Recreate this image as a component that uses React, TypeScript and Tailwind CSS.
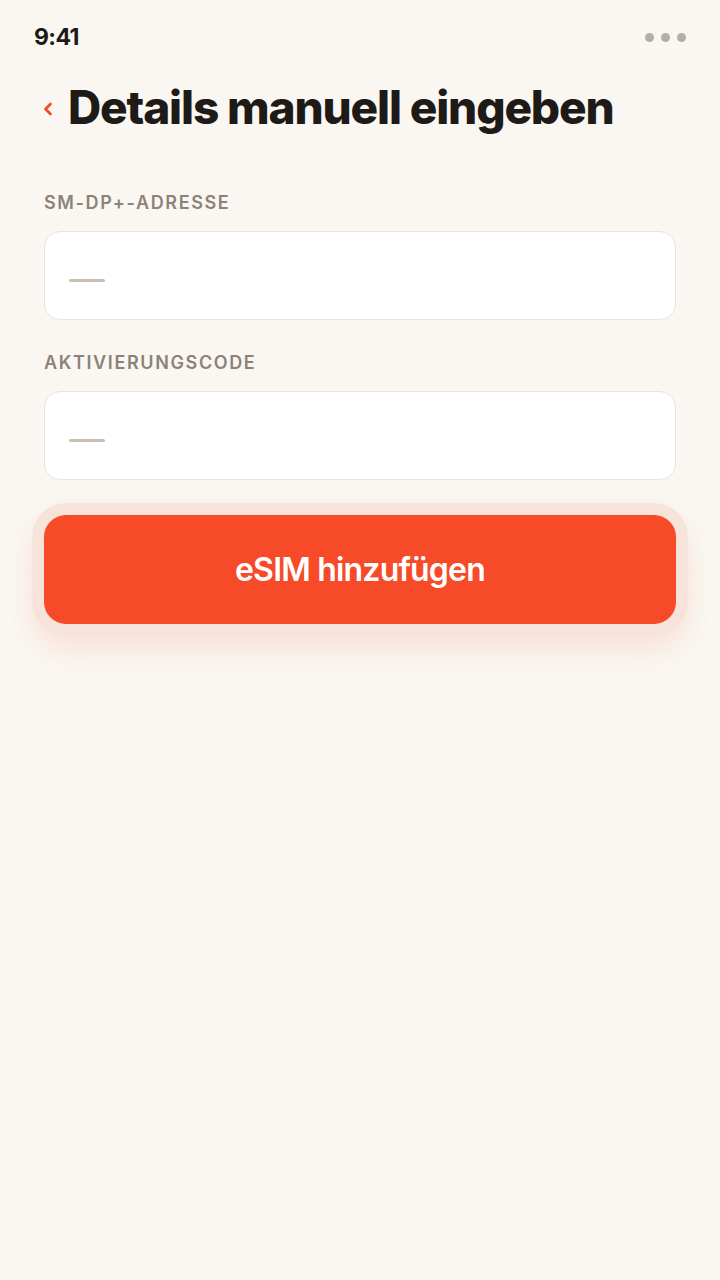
import { ChevronLeft } from 'lucide-react';

function Field({ label }: { label: string }) {
  return (
    <div className="flex flex-col">
      <label className="text-[18px] font-semibold tracking-[0.09em] text-[#8c8278] leading-none mb-[19px]">
        {label}
      </label>
      <div className="h-[89px] rounded-[16px] border border-[#ebe4da] bg-white flex items-center px-[24px]">
        <div className="w-[36px] h-[3px] mt-[9px] rounded-full bg-[#c9c0b3]" />
      </div>
    </div>
  );
}

export default function App() {
  return (
    <div
      className="min-h-[1280px] w-[720px] bg-[#faf7f2] text-[#1d1a17]"
      style={{ fontFamily: 'Inter, "Noto Sans", sans-serif' }}
    >
      <div className="flex items-center justify-between px-[34px] pt-[24px] h-[50px]">
        <span className="text-[23px] font-bold tracking-tight leading-none">9:41</span>
        <div className="flex gap-[7px]">
          <span className="w-[9px] h-[9px] rounded-full bg-[#b6aea5]" />
          <span className="w-[9px] h-[9px] rounded-full bg-[#b6aea5]" />
          <span className="w-[9px] h-[9px] rounded-full bg-[#b6aea5]" />
        </div>
      </div>

      <div className="px-[44px]">
        <div className="flex items-center gap-[10px] mt-[34px]">
          <ChevronLeft className="w-[20px] h-[20px] text-[#f64a29] -ml-[6px] mt-[4px]" strokeWidth={3.2} />
          <h1 className="text-[46px] font-extrabold tracking-[-0.025em] leading-none">
            Details manuell eingeben
          </h1>
        </div>

        <div className="mt-[64px] flex flex-col gap-[34px]">
          <Field label="SM-DP+-ADRESSE" />
          <Field label="AKTIVIERUNGSCODE" />
        </div>

        <div className="mt-[23px] -mx-[12px] p-[12px] rounded-[34px] bg-[#f6ddd2]/80 shadow-[0_14px_30px_rgba(246,74,41,0.12)]">
          <button className="w-full h-[109px] rounded-[22px] bg-[#f64a29] text-white text-[32px] font-semibold tracking-tight">
            eSIM hinzufügen
          </button>
        </div>
      </div>
    </div>
  );
}
